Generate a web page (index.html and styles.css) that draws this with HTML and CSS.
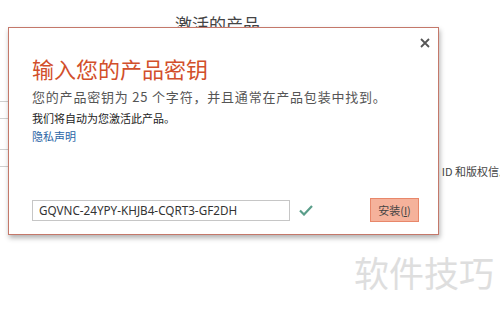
FILE: index.html
```html
<!DOCTYPE html>
<html lang="zh-CN">
<head>
  <meta charset="UTF-8" />
  <title>激活的产品</title>
  <link rel="stylesheet" href="styles.css">
</head>
<body>
  <div class="backdrop">
    <h1 class="page-title">激活的产品</h1>
    <div class="backdrop-body">
      <div class="list">
        <div class="list-row row-a"></div>
        <div class="list-row row-b"></div>
        <div class="list-row row-c"></div>
        <div class="list-row row-d"></div>
      </div>
      <p class="side-info">产品 ID 和版权信息</p>
    </div>
  </div>

  <div class="dialog">
    <button class="close" title="关闭">
      <svg width="10" height="10" viewBox="0 0 10 10">
        <path d="M1 1 L9 9 M9 1 L1 9" stroke="#555" stroke-width="1.8" fill="none" />
      </svg>
    </button>
    <h2 class="dialog-title">输入您的产品密钥</h2>
    <p class="dialog-desc">您的产品密钥为 25 个字符，并且通常在产品包装中找到。</p>
    <p class="dialog-note">我们将自动为您激活此产品。</p>
    <a class="dialog-link" href="#">隐私声明</a>
    <div class="key-row">
      <input class="key-input" type="text" value="GQVNC-24YPY-KHJB4-CQRT3-GF2DH">
      <svg class="key-ok" width="14" height="11" viewBox="0 0 14 11">
        <path d="M1 5.5 L5 9.5 L13 1" stroke="#5a9e8a" stroke-width="2.2" fill="none" />
      </svg>
      <button class="install">安装(<u>I</u>)</button>
    </div>
  </div>

  <div class="watermark">软件技巧</div>
</body>
</html>
```

FILE: styles.css
```css
body {
  margin: 0;
  width: 500px;
  height: 311px;
  overflow: hidden;
  background: #fff;
  font-family: "Noto Sans CJK SC", "Noto Sans", sans-serif;
  color: #444;
  position: relative;
}
.page-title {
  margin: 0;
  padding: 12px 0 0 175px;
  font-size: 17px;
  font-weight: normal;
  color: #444;
  line-height: 24px;
}
.backdrop-body {
  display: flex;
  justify-content: space-between;
}
.list {
  width: 40px;
}
.list-row {
  border-bottom: 1px solid #cfcfcf;
}
.row-a { height: 65px; }
.row-b { height: 16px; }
.row-c { height: 30px; }
.row-d { height: 16px; }
.side-info {
  margin: 127px -10px 0 0;
  font-size: 11px;
  color: #444;
  white-space: nowrap;
}
.dialog {
  position: absolute;
  left: 8px;
  top: 27px;
  width: 429px;
  height: 206px;
  box-sizing: content-box;
  border: 1px solid #c4786a;
  background: #fff;
  box-shadow: 1px 3px 5px rgba(0,0,0,0.3);
  display: flex;
  flex-direction: column;
  padding: 0;
}
.close {
  position: absolute;
  top: 9px;
  right: 7px;
  border: none;
  background: none;
  padding: 0;
  width: 12px;
  height: 12px;
  display: flex;
  align-items: center;
  justify-content: center;
}
.dialog-title {
  margin: 26px 0 0 23px;
  font-size: 22px;
  font-weight: normal;
  color: #d24f2b;
  line-height: 28px;
}
.dialog-desc {
  margin: 6px 0 0 23px;
  font-size: 13px;
  letter-spacing: 0.8px;
  color: #555;
  line-height: 18px;
}
.dialog-note {
  margin: 4px 0 0 23px;
  font-size: 11px;
  color: #222;
  line-height: 16px;
}
.dialog-link {
  margin: 2px 0 0 23px;
  font-size: 11px;
  color: #2b65a5;
  text-decoration: none;
  line-height: 16px;
}
.key-row {
  margin-top: auto;
  margin-bottom: 12px;
  padding: 0 19px 0 23px;
  display: flex;
  align-items: center;
}
.key-input {
  width: 258px;
  height: 21px;
  box-sizing: border-box;
  border: 1px solid #c6c6c6;
  padding: 0 6px;
  font-family: "Noto Sans", sans-serif;
  font-size: 11.7px;
  color: #333;
}
.key-ok {
  margin-left: 9px;
}
.install {
  margin-left: auto;
  width: 49px;
  height: 24px;
  background: #f5b29b;
  border: 1px solid #e8876a;
  font-family: "Noto Sans CJK SC", sans-serif;
  font-size: 11px;
  color: #444;
  padding: 0;
}
.watermark {
  position: absolute;
  left: 354px;
  top: 252px;
  font-size: 35px;
  line-height: 40px;
  color: #dedede;
}
```
